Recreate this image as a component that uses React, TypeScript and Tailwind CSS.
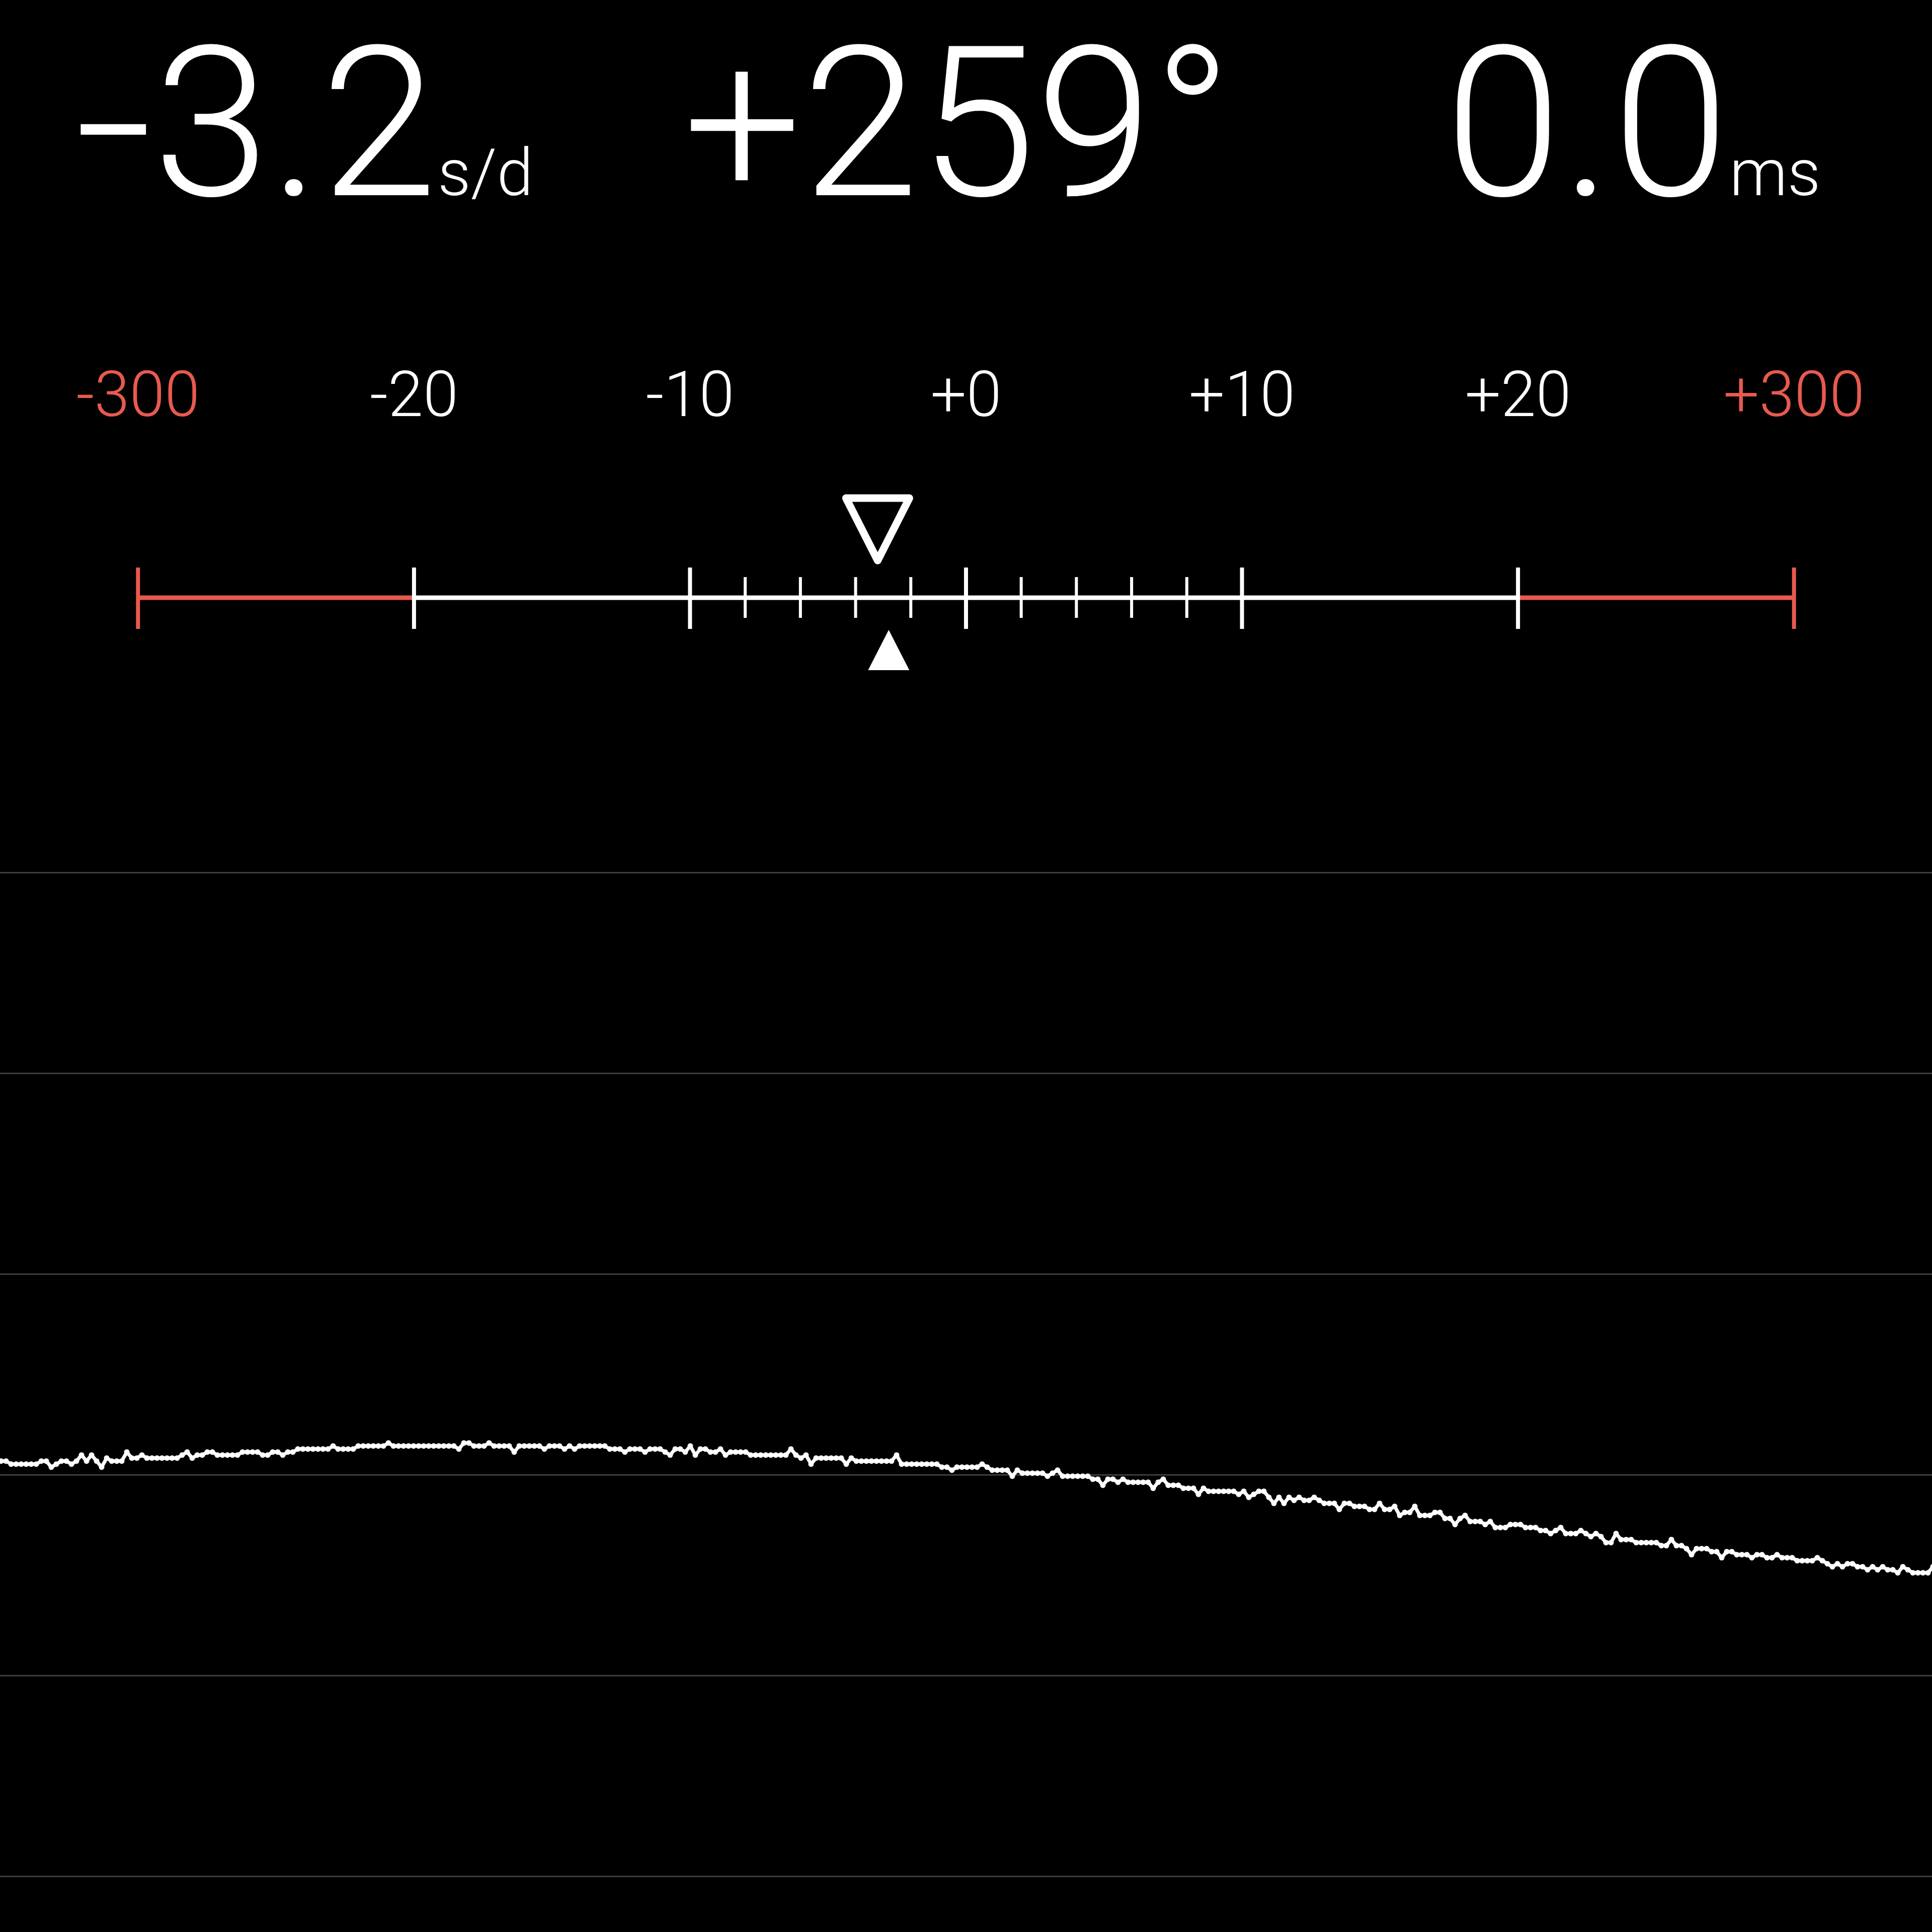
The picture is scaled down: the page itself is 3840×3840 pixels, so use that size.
import React from 'react';

const RED = '#e85a4f';
const UNIT = 54.857; // px per s/d in the ±20 zone
const CENTER = 1920;

const labels = [
  { text: '-300', red: true },
  { text: '-20' },
  { text: '-10' },
  { text: '+0' },
  { text: '+10' },
  { text: '+20' },
  { text: '+300', red: true },
];

// deterministic noise so the trace looks the same every render
const mulberry = (seed: number) => () => {
  seed |= 0;
  seed = (seed + 0x6d2b79f5) | 0;
  let t = Math.imul(seed ^ (seed >>> 15), 1 | seed);
  t = (t + Math.imul(t ^ (t >>> 7), 61 | t)) ^ t;
  return ((t ^ (t >>> 14)) >>> 0) / 4294967296;
};

const curve: [number, number][] = [
  [0, 2910], [400, 2893], [808, 2872], [1100, 2873], [1400, 2884],
  [1714, 2902], [1920, 2917], [2204, 2940], [2449, 2966], [2694, 2993],
  [2939, 3024], [3184, 3055], [3429, 3085], [3674, 3110], [3840, 3128],
];

const baseAt = (x: number) => {
  for (let i = 0; i < curve.length - 1; i++) {
    const [x0, y0] = curve[i];
    const [x1, y1] = curve[i + 1];
    if (x >= x0 && x <= x1) return y0 + ((y1 - y0) * (x - x0)) / (x1 - x0);
  }
  return curve[curve.length - 1][1];
};

const buildTrace = () => {
  const rand = mulberry(7);
  const pts: [number, number][] = [];
  for (let x = 2; x < 3846; x += 10) {
    let y = Math.round(baseAt(x) / 6) * 6;
    const r = rand();
    if (r < 0.12) y -= 6;
    else if (r < 0.24) y += 6;
    else if (r < 0.28) y += 12;
    else if (r < 0.31) y -= 12;
    pts.push([x, y]);
  }
  return pts;
};

const trace = buildTrace();

const Scale = () => {
  const majors = [0, 1, 2, 3, 4, 5, 6].map((i) => 274.3 + i * 548.57);
  const minors = [-8, -6, -4, -2, 2, 4, 6, 8].map((v) => CENTER + v * UNIT);
  const hollowX = CENTER - 3.2 * UNIT;
  const solidX = CENTER - 2.8 * UNIT;
  const lineY = 341;

  return (
    <svg width={3840} height={886} className="block">
      <line x1={majors[0]} y1={lineY} x2={majors[1]} y2={lineY} stroke={RED} strokeWidth={9} />
      <line x1={majors[1]} y1={lineY} x2={majors[5]} y2={lineY} stroke="#fff" strokeWidth={9} />
      <line x1={majors[5]} y1={lineY} x2={majors[6]} y2={lineY} stroke={RED} strokeWidth={9} />
      {majors.map((x, i) => (
        <line
          key={x}
          x1={x}
          y1={281}
          x2={x}
          y2={403}
          stroke={i === 0 || i === 6 ? RED : '#fff'}
          strokeWidth={8}
        />
      ))}
      {minors.map((x) => (
        <line key={x} x1={x} y1={300} x2={x} y2={381} stroke="#fff" strokeWidth={6} />
      ))}
      <polygon
        points={`${hollowX - 63},143 ${hollowX + 63},143 ${hollowX},267`}
        fill="none"
        stroke="#fff"
        strokeWidth={15}
        strokeLinejoin="round"
      />
      <polygon points={`${solidX},405 ${solidX + 41},485 ${solidX - 41},485`} fill="#fff" />
    </svg>
  );
};

export default function App() {
  return (
    <div
      className="w-[3840px] h-[3840px] bg-black text-white overflow-hidden"
      style={{ fontFamily: 'Roboto, "Noto Sans", sans-serif' }}
    >
      <div className="flex h-[721px] pt-[37px] text-[417px] leading-none font-light tracking-[1px]">
        <div className="w-[1358px] pl-[147px] whitespace-nowrap">
          <span className="inline-block origin-left scale-x-[1.33] mr-[37px]">-</span>3.2
          <span className="text-[130px] tracking-normal">s/d</span>
        </div>
        <div className="w-[1514px] whitespace-nowrap">+259°</div>
        <div className="whitespace-nowrap">
          0.0<span className="text-[130px] tracking-normal">ms</span>
        </div>
      </div>

      <div className="grid grid-cols-7 h-[126px] text-[126px] leading-none font-light">
        {labels.map((l) => (
          <div
            key={l.text}
            className={`text-center ${l.red ? 'text-[#e85a4f]' : 'text-white'}`}
          >
            {l.text}
          </div>
        ))}
      </div>

      <Scale />

      <div className="relative">
        {[0, 1, 2, 3, 4, 5].map((i) => (
          <div key={i} className="h-[399px] border-t-[3px] border-[#3c3c3c]" />
        ))}
        <svg width={3840} height={2107} className="absolute left-0 top-0">
          <polyline
            points={trace.map(([x, y]) => `${x},${y - 1733}`).join(' ')}
            fill="none"
            stroke="#fff"
            strokeWidth={7}
            strokeLinejoin="round"
          />
          {trace.map(([x, y], i) => (
            <circle key={i} cx={x} cy={y - 1733} r={5.5} fill="#fff" />
          ))}
        </svg>
      </div>
    </div>
  );
}
